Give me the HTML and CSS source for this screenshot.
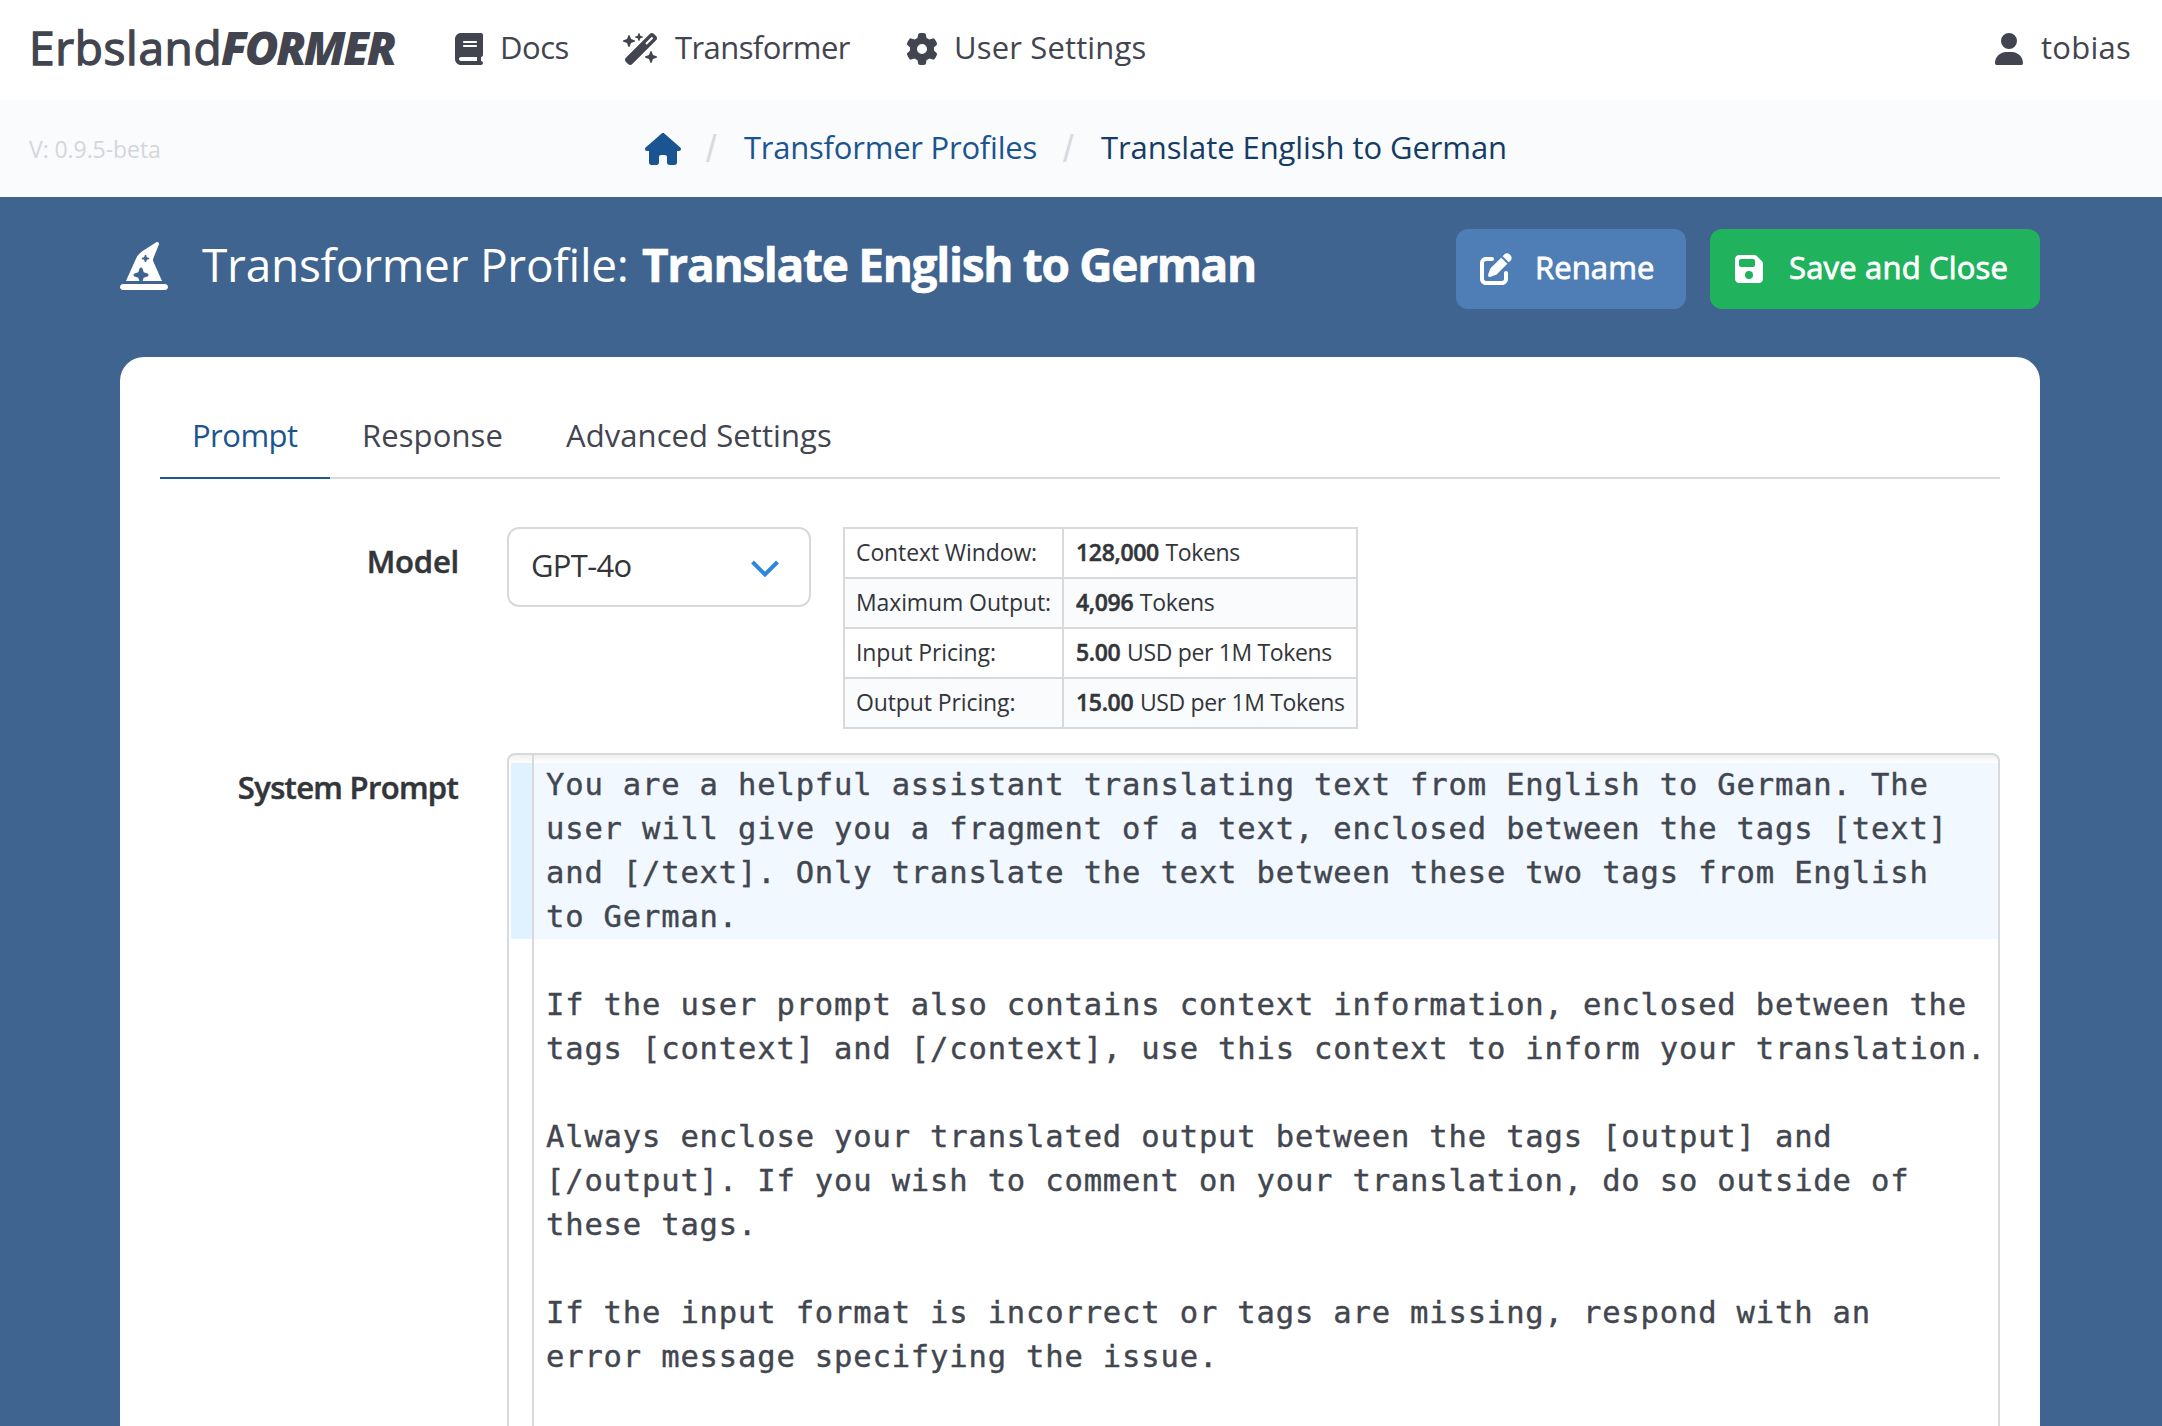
FILE: index.html
```
<!DOCTYPE html>
<html lang="en">
<head>
<meta charset="utf-8">
<title>Translate English to German - ErbslandFORMER</title>
<link rel="stylesheet" href="styles.css">
</head>
<body>
<header class="topbar">
  <a class="brand"><span class="brand-name">Erbsland</span><span class="brand-former">FORMER</span></a>
  <nav class="main-nav">
    <a class="nav-item nav-docs">
      <svg class="icon" width="28" height="32" viewBox="0 0 448 512"><path d="M96 0C43 0 0 43 0 96V416c0 53 43 96 96 96H384h32c17.7 0 32-14.3 32-32s-14.3-32-32-32V384c17.7 0 32-14.3 32-32V32c0-17.7-14.3-32-32-32H384 96zm0 384H352v64H96c-17.7 0-32-14.3-32-32s14.3-32 32-32zm32-240c0-8.8 7.2-16 16-16H336c8.8 0 16 7.2 16 16s-7.2 16-16 16H144c-8.8 0-16-7.2-16-16zm16 48H336c8.8 0 16 7.2 16 16s-7.2 16-16 16H144c-8.8 0-16-7.2-16-16s7.2-16 16-16z"/></svg>
      <span class="label">Docs</span>
    </a>
    <a class="nav-item nav-transformer">
      <svg class="icon" width="36" height="32" viewBox="0 0 576 512"><path d="M234.7 42.7L197 56.8c-3 1.1-5 4-5 7.2s2 6.1 5 7.2l37.7 14.1L248.8 123c1.1 3 4 5 7.2 5s6.1-2 7.2-5l14.1-37.7L315 71.2c3-1.1 5-4 5-7.2s-2-6.1-5-7.2L277.3 42.7 263.2 5c-1.1-3-4-5-7.2-5s-6.1 2-7.2 5L234.7 42.7zM46.1 395.4c-18.7 18.7-18.7 49.1 0 67.9l34.6 34.6c18.7 18.7 49.1 18.7 67.9 0L529.9 116.5c18.7-18.7 18.7-49.1 0-67.9L495.3 14.1c-18.7-18.7-49.1-18.7-67.9 0L46.1 395.4zM484.6 82.6l-105 105-23.3-23.3 105-105 23.3 23.3zM7.5 117.2C3 118.9 0 123.2 0 128s3 9.1 7.5 10.8L64 160l21.2 56.5c1.7 4.5 6 7.5 10.8 7.5s9.1-3 10.8-7.5L128 160l56.5-21.2c4.5-1.7 7.5-6 7.5-10.8s-3-9.1-7.5-10.8L128 96 106.8 39.5C105.1 35 100.8 32 96 32s-9.1 3-10.8 7.5L64 96 7.5 117.2zm352 256c-4.5 1.7-7.5 6-7.5 10.8s3 9.1 7.5 10.8L416 416l21.2 56.5c1.7 4.5 6 7.5 10.8 7.5s9.1-3 10.8-7.5L480 416l56.5-21.2c4.5-1.7 7.5-6 7.5-10.8s-3-9.1-7.5-10.8L480 352l-21.2-56.5c-1.7-4.5-6-7.5-10.8-7.5s-9.1 3-10.8 7.5L416 352l-56.5 21.2z"/></svg>
      <span class="label">Transformer</span>
    </a>
    <a class="nav-item nav-settings">
      <svg class="icon" width="32" height="32" viewBox="0 0 512 512"><path d="M495.9 166.6c3.2 8.7 .5 18.4-6.4 24.6l-43.3 39.4c1.1 8.3 1.7 16.8 1.7 25.4s-.6 17.1-1.7 25.4l43.3 39.4c6.9 6.2 9.6 15.9 6.4 24.6c-4.4 11.9-9.7 23.3-15.8 34.3l-4.7 8.1c-6.6 11-14 21.4-22.1 31.2c-5.9 7.2-15.7 9.6-24.5 6.8l-55.7-17.7c-13.4 10.3-28.2 18.9-44 25.4l-12.5 57.1c-2 9.1-9 16.3-18.2 17.8c-13.8 2.3-28 3.5-42.5 3.5s-28.7-1.2-42.5-3.5c-9.2-1.5-16.2-8.7-18.2-17.8l-12.5-57.1c-15.8-6.5-30.6-15.1-44-25.4L83.1 425.9c-8.8 2.8-18.6 .3-24.5-6.8c-8.1-9.8-15.5-20.2-22.1-31.2l-4.7-8.1c-6.1-11-11.4-22.4-15.8-34.3c-3.2-8.7-.5-18.4 6.4-24.6l43.3-39.4C64.6 273.1 64 264.6 64 256s.6-17.1 1.7-25.4L22.4 191.2c-6.9-6.2-9.6-15.9-6.4-24.6c4.4-11.9 9.7-23.3 15.8-34.3l4.7-8.1c6.6-11 14-21.4 22.1-31.2c5.9-7.2 15.7-9.6 24.5-6.8l55.7 17.7c13.4-10.3 28.2-18.9 44-25.4l12.5-57.1c2-9.1 9-16.3 18.2-17.8C227.3 1.2 241.5 0 256 0s28.7 1.2 42.5 3.5c9.2 1.5 16.2 8.7 18.2 17.8l12.5 57.1c15.8 6.5 30.6 15.1 44 25.4l55.7-17.7c8.8-2.8 18.6-.3 24.5 6.8c8.1 9.8 15.5 20.2 22.1 31.2l4.7 8.1c6.1 11 11.4 22.4 15.8 34.3zM256 336a80 80 0 1 0 0-160 80 80 0 1 0 0 160z"/></svg>
      <span class="label">User Settings</span>
    </a>
  </nav>
  <a class="nav-item nav-user">
    <svg class="icon" width="28" height="32" viewBox="0 0 448 512"><path d="M224 256A128 128 0 1 0 224 0a128 128 0 1 0 0 256zm-45.7 48C79.8 304 0 383.8 0 482.3C0 498.7 13.3 512 29.7 512H418.3c16.4 0 29.7-13.3 29.7-29.7C448 383.8 368.2 304 269.7 304H178.3z"/></svg>
    <span class="label">tobias</span>
  </a>
</header>

<div class="crumb-bar">
  <div class="version">V: 0.9.5-beta</div>
  <nav class="crumbs">
    <svg class="icon home" width="36" height="32" viewBox="0 0 576 512"><path d="M575.8 255.5c0 18-15 32.1-32 32.1h-32l.7 160.2c0 2.7-.2 5.4-.5 8.1V472c0 22.1-17.9 40-40 40H456c-1.1 0-2.2 0-3.3-.1c-1.4 .1-2.8 .1-4.2 .1H416 392c-22.1 0-40-17.9-40-40V448 384c0-17.7-14.3-32-32-32H256c-17.7 0-32 14.3-32 32v64 24c0 22.1-17.9 40-40 40H160 128.1c-1.5 0-3-.1-4.5-.2c-1.2 .1-2.4 .2-3.6 .2H104c-22.1 0-40-17.9-40-40V360c0-.9 0-1.9 .1-2.8V287.6H32c-18 0-32-14-32-32.1c0-9 3-17 10-24L266.4 8c7-7 15-8 22-8s15 2 21 7L564.8 231.5c8 7 12 15 11 24z"/></svg>
    <span class="slash">/</span>
    <a class="label crumb-link">Transformer Profiles</a>
    <span class="slash">/</span>
    <span class="label crumb-current">Translate English to German</span>
  </nav>
</div>

<main class="page">
  <div class="page-head">
    <svg class="icon hat" width="48" height="48" viewBox="0 0 512 512"><path d="M64 416L168.6 180.7c15.3-34.4 40.3-63.5 72-83.7l146.9-94c3-1.9 6.5-2.9 10-2.9C407.7 0 416 8.3 416 18.6v1.6c0 2.6-.5 5.1-1.4 7.5L354.8 176.9c-1.9 4.7-2.8 9.7-2.8 14.7c0 5.5 1.2 11 3.4 16.1L448 416H240.9l11.8-35.4 40.4-13.5c6.5-2.2 10.9-8.3 10.9-15.2s-4.4-13-10.9-15.2l-40.4-13.5-13.5-40.4C237 276.4 230.9 272 224 272s-13 4.4-15.2 10.9l-13.5 40.4-40.4 13.5C148.4 339 144 345.1 144 352s4.4 13 10.9 15.2l40.4 13.5L207.1 416H64zM279.6 141.5c-1.1-3.3-4.1-5.5-7.6-5.5s-6.5 2.2-7.6 5.5l-6.7 20.2-20.2 6.7c-3.3 1.1-5.5 4.1-5.5 7.6s2.2 6.5 5.5 7.6l20.2 6.7 6.7 20.2c1.1 3.3 4.1 5.5 7.6 5.5s6.5-2.2 7.6-5.5l6.7-20.2 20.2-6.7c3.3-1.1 5.5-4.1 5.5-7.6s-2.2-6.5-5.5-7.6l-20.2-6.7-6.7-20.2zM32 448H480c17.7 0 32 14.3 32 32s-14.3 32-32 32H32c-17.7 0-32-14.3-32-32s14.3-32 32-32z"/></svg>
    <h1 class="title"><span class="title-kind">Transformer Profile:</span> <strong class="title-name">Translate English to German</strong></h1>
    <div class="actions">
      <button class="btn btn-rename">
        <svg class="icon" width="32" height="32" viewBox="0 0 512 512"><path d="M471.6 21.7c-21.9-21.9-57.3-21.9-79.2 0L362.3 51.7l97.9 97.9 30.1-30.1c21.9-21.9 21.9-57.3 0-79.2L471.6 21.7zm-299.2 220c-6.1 6.1-10.8 13.6-13.5 21.9l-29.6 88.8c-2.9 8.6-.6 18.1 5.8 24.6s15.9 8.7 24.6 5.8l88.8-29.6c8.2-2.7 15.7-7.4 21.9-13.5L437.7 172.3 339.7 74.3 172.4 241.7zM96 64C43 64 0 107 0 160V416c0 53 43 96 96 96H352c53 0 96-43 96-96V320c0-17.7-14.3-32-32-32s-32 14.3-32 32v96c0 17.7-14.3 32-32 32H96c-17.7 0-32-14.3-32-32V160c0-17.7 14.3-32 32-32h96c17.7 0 32-14.3 32-32s-14.3-32-32-32H96z"/></svg>
        <span class="label">Rename</span>
      </button>
      <button class="btn btn-save">
        <svg class="icon" width="28" height="32" viewBox="0 0 448 512"><path d="M64 32C28.7 32 0 60.7 0 96V416c0 35.3 28.7 64 64 64H384c35.3 0 64-28.7 64-64V173.3c0-17-6.7-33.3-18.7-45.3L352 50.7C340 38.7 323.7 32 306.7 32H64zm0 96c0-17.7 14.3-32 32-32H288c17.7 0 32 14.3 32 32v64c0 17.7-14.3 32-32 32H96c-17.7 0-32-14.3-32-32V128zM224 288a64 64 0 1 1 0 128 64 64 0 1 1 0-128z"/></svg>
        <span class="label">Save and Close</span>
      </button>
    </div>
  </div>

  <section class="card">
    <div class="tabs">
      <a class="tab tab-prompt active">Prompt</a>
      <a class="tab tab-response">Response</a>
      <a class="tab tab-advanced">Advanced Settings</a>
    </div>

    <div class="form">
      <label class="field-label label-model">Model</label>
      <div class="model-row">
        <div class="select">
          <span class="select-value">GPT-4o</span>
          <svg class="chevron" width="28" height="18" viewBox="0 0 28 18"><path d="M1.5 2 L14 14.5 L26.5 2" fill="none" stroke="#2f86dc" stroke-width="4"/></svg>
        </div>
        <table class="specs">
          <colgroup><col class="col-name"><col class="col-value"></colgroup>
          <tr><td>Context Window:</td><td><strong>128,000</strong> Tokens</td></tr>
          <tr><td>Maximum Output:</td><td><strong>4,096</strong> Tokens</td></tr>
          <tr><td>Input Pricing:</td><td><strong>5.00</strong> USD per 1M Tokens</td></tr>
          <tr><td>Output Pricing:</td><td><strong>15.00</strong> USD per 1M Tokens</td></tr>
        </table>
      </div>

      <label class="field-label label-system">System Prompt</label>
      <div class="editor">
        <div class="gutter"><div class="gutter-active"></div></div>
        <div class="lines">
          <div class="line line-active">You are a helpful assistant translating text from English to German. The
user will give you a fragment of a text, enclosed between the tags [text]
and [/text]. Only translate the text between these two tags from English
to German.</div>
          <div class="line"> </div>
          <div class="line">If the user prompt also contains context information, enclosed between the
tags [context] and [/context], use this context to inform your translation.</div>
          <div class="line"> </div>
          <div class="line">Always enclose your translated output between the tags [output] and
[/output]. If you wish to comment on your translation, do so outside of
these tags.</div>
          <div class="line"> </div>
          <div class="line">If the input format is incorrect or tags are missing, respond with an
error message specifying the issue.</div>
        </div>
      </div>
    </div>
  </section>
</main>
</body>
</html>
```
FILE: styles.css
```
* { box-sizing: border-box; }

body {
  margin: 0;
  height: 1426px;
  overflow: hidden;
  display: flex;
  flex-direction: column;
  background: #fff;
  color: #42454f;
  font-family: "Open Sans", "Noto Sans", sans-serif;
  font-size: 31px;
  line-height: 44px;
}

.icon { display: block; flex: none; fill: currentColor; }
.label { padding-bottom: 4px; white-space: nowrap; }

/* Top bar */
.topbar {
  flex: none;
  height: 100px;
  padding: 0 31px 2px 29px;
  display: flex;
  align-items: center;
}
.brand { display: flex; width: 426px; padding-bottom: 4px; font-size: 46px; line-height: 60px; }
.brand-name { width: 192px; letter-spacing: 0.67px; -webkit-text-stroke: 1.3px currentColor; }
.brand-former { font-weight: 800; font-style: italic; letter-spacing: -2.39px; }
.main-nav { display: flex; flex: 1; }
.nav-item { display: flex; align-items: center; }
.nav-docs { width: 168px; gap: 17px; letter-spacing: -0.5px; }
.nav-transformer { width: 283px; gap: 16px; letter-spacing: -0.58px; }
.nav-settings { gap: 16px; letter-spacing: 0.15px; }
.nav-user { gap: 18px; letter-spacing: 0.26px; }

/* Breadcrumbs */
.crumb-bar {
  flex: none;
  height: 97px;
  padding: 0 29px;
  display: flex;
  align-items: center;
  background: #fafbfd;
}
.version { width: 616px; color: #d5d6da; font-size: 23px; letter-spacing: -0.07px; }
.crumbs { display: flex; align-items: center; }
.home { color: #1b5591; }
.slash {
  width: 10px;
  margin: 0 28px 0 25px;
  color: #d9dadd;
  font-family: "Liberation Sans", sans-serif;
  font-size: 38px;
}
.crumb-link { width: 294px; color: #1b5591; letter-spacing: -0.23px; }
.crumb-current { color: #143c66; letter-spacing: -0.08px; }

/* Page header */
.page {
  flex: 1;
  min-height: 0;
  padding: 32px 122px 0 120px;
  display: flex;
  flex-direction: column;
  background: #3f648f;
  color: #fff;
}
.page-head { flex: none; height: 80px; display: flex; align-items: center; }
.hat { margin: 0 34px 6px 0; }
.title {
  flex: 1;
  margin: 0;
  padding-bottom: 10px;
  display: flex;
  font-size: 46px;
  line-height: 60px;
  white-space: nowrap;
}
.title-kind { width: 440px; font-weight: 400; letter-spacing: -0.25px; }
.title-name { font-weight: 700; letter-spacing: -1.31px; -webkit-text-stroke: 0.6px currentColor; }
.actions { display: flex; gap: 24px; }
.btn {
  height: 80px;
  padding: 0 0 0 24px;
  border: 0;
  border-radius: 12px;
  display: flex;
  align-items: center;
  color: #fff;
  font: 400 31px/44px "Open Sans", "Noto Sans", sans-serif;
  -webkit-text-stroke: 0.8px currentColor;
}
.btn-rename { width: 230px; gap: 23px; background: #4f7eb6; letter-spacing: 0.1px; }
.btn-save { width: 330px; padding-left: 25px; gap: 26px; background: #20b25d; letter-spacing: 0.18px; }

/* Card and tabs */
.card {
  flex: 1;
  min-height: 0;
  margin-top: 48px;
  padding: 40px 40px 0;
  border-radius: 24px 24px 0 0;
  background: #fff;
  color: #42454f;
}
.tabs { display: flex; height: 82px; border-bottom: 2px solid #d9dadb; }
.tab {
  height: 82px;
  padding: 0 31px 0 32px;
  border-bottom: 2px solid transparent;
  line-height: 76px;
  white-space: nowrap;
}
.tab.active { border-bottom-color: #1f5791; color: #1b5591; }
.tab-prompt { width: 170px; letter-spacing: -0.53px; }
.tab-response { width: 204px; letter-spacing: 0.1px; }
.tab-advanced { letter-spacing: 0.08px; }

/* Form */
.form {
  margin-top: 48px;
  display: grid;
  grid-template-columns: 299px 1493px;
  column-gap: 48px;
  row-gap: 24px;
}
.field-label {
  color: #32353a;
  font-weight: 600;
  line-height: 68px;
  text-align: right;
  -webkit-text-stroke: 0.5px currentColor;
}
.label-model { letter-spacing: -0.2px; }
.label-system { padding-right: 1px; letter-spacing: -0.68px; }
.model-row { display: flex; align-items: flex-start; gap: 32px; }
.select {
  width: 304px;
  height: 80px;
  padding: 0 30px 0 22px;
  border: 2px solid #d8d9db;
  border-radius: 12px;
  display: flex;
  align-items: center;
  justify-content: space-between;
  color: #32353a;
}
.select-value { padding-bottom: 4px; letter-spacing: -0.69px; }
.chevron { display: block; margin-top: 4px; }

.specs {
  width: 515px;
  table-layout: fixed;
  border-collapse: collapse;
  color: #32353a;
  font-size: 23px;
  line-height: 32px;
}
.col-name { width: 219px; }
.col-value { width: 294px; }
.specs td {
  height: 50px;
  padding: 0 0 2px 11px;
  border: 2px solid #d8d9db;
  letter-spacing: -0.11px;
  white-space: nowrap;
}
.specs td + td { padding-left: 12px; letter-spacing: -0.35px; }
.specs tr:nth-child(even) { background: #fafbfd; }
.specs strong { margin-right: 1px; font-weight: 600; letter-spacing: -0.33px; -webkit-text-stroke: 0.5px currentColor; }

/* Prompt editor */
.editor {
  height: 673px;
  display: flex;
  border: 2px solid #d8d9db;
  border-bottom: 0;
  border-radius: 8px 8px 0 0;
  overflow: hidden;
  background: linear-gradient(#f0f0f1, #fff 8px);
}
.gutter { flex: none; width: 25px; padding: 8px 0 0 2px; border-right: 2px solid #d8d9db; }
.gutter-active { height: 176px; background: #e0f2ff; }
.lines {
  flex: 1;
  padding-top: 8px;
  color: #42464f;
  font-family: "DejaVu Sans Mono", monospace;
  font-size: 30.5px;
  letter-spacing: 0.84px;
  -webkit-text-stroke: 0.4px currentColor;
}
.line { min-height: 44px; padding-left: 12px; white-space: pre; }
.line-active { background: #f1f8ff; }
```
